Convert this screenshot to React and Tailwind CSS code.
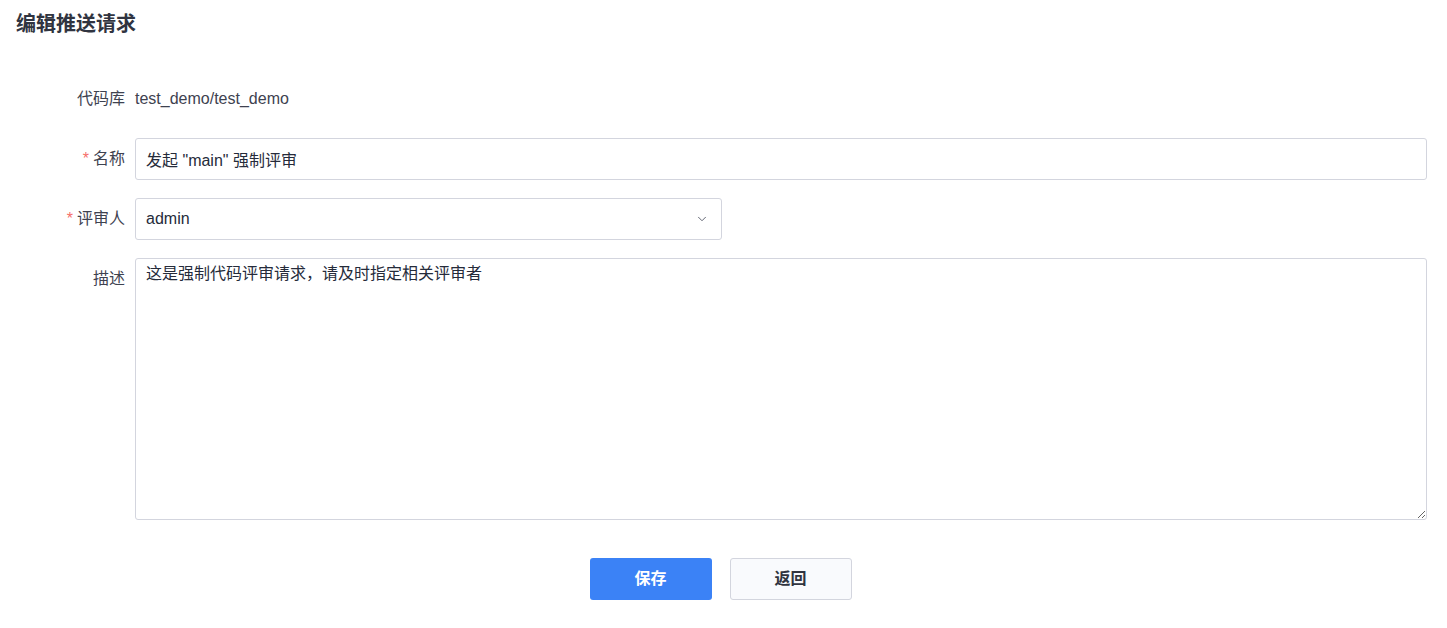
import { ChevronDown } from "lucide-react";

const font = { fontFamily: '"Liberation Sans", "Noto Sans CJK SC", sans-serif' };

const Label = ({ required, children, top }) => (
  <div className={`w-[135px] shrink-0 pr-[10px] text-right text-[16px] leading-[24px] text-[#3e4250] ${top ? "pt-[9px]" : ""}`}>
    {required && <span className="mr-[4px] text-[#f66f6a]">*</span>}
    {children}
  </div>
);

const App = () => {
  return (
    <div className="min-h-screen w-full bg-white text-[#252b3a]" style={font}>
      <h1 className="px-[16px] pt-[10px] text-[20px] font-bold leading-[28px] text-[#303440]">编辑推送请求</h1>

      <div className="mt-[48px] flex flex-col pr-[20px]">
        <div className="flex h-[26px] items-center">
          <Label>代码库</Label>
          <span className="text-[16px] text-[#3e4250]">test_demo/test_demo</span>
        </div>

        <div className="mt-[26px] flex items-center">
          <Label required>名称</Label>
          <input
            defaultValue={'发起 "main" 强制评审'}
            className="h-[42px] flex-1 rounded-[3px] border border-[#d3d5de] px-[10px] text-[16px] text-[#252b3a] outline-none"
          />
        </div>

        <div className="mt-[18px] flex items-center">
          <Label required>评审人</Label>
          <div className="flex h-[42px] w-[587px] items-center justify-between rounded-[3px] border border-[#d3d5de] pl-[10px] pr-[12px] text-[16px]">
            <span>admin</span>
            <ChevronDown className="h-[14px] w-[14px] text-[#585d6b]" strokeWidth={1.6} />
          </div>
        </div>

        <div className="mt-[18px] flex items-start">
          <Label top>描述</Label>
          <textarea
            defaultValue="这是强制代码评审请求，请及时指定相关评审者"
            className="h-[262px] flex-1 rounded-[3px] border border-[#d3d5de] px-[10px] pt-[4px] text-[16px] leading-[22px] text-[#252b3a] outline-none"
          />
        </div>
      </div>

      <div className="mt-[38px] flex justify-center gap-[18px] pr-[6px]">
        <button className="h-[42px] w-[122px] rounded-[3px] bg-[#3b82f6] text-[16px] font-bold text-white">保存</button>
        <button className="h-[42px] w-[122px] rounded-[3px] border border-[#d3d5de] bg-[#f9fafd] text-[16px] font-semibold text-[#303440]">返回</button>
      </div>
    </div>
  );
};

export default App;
